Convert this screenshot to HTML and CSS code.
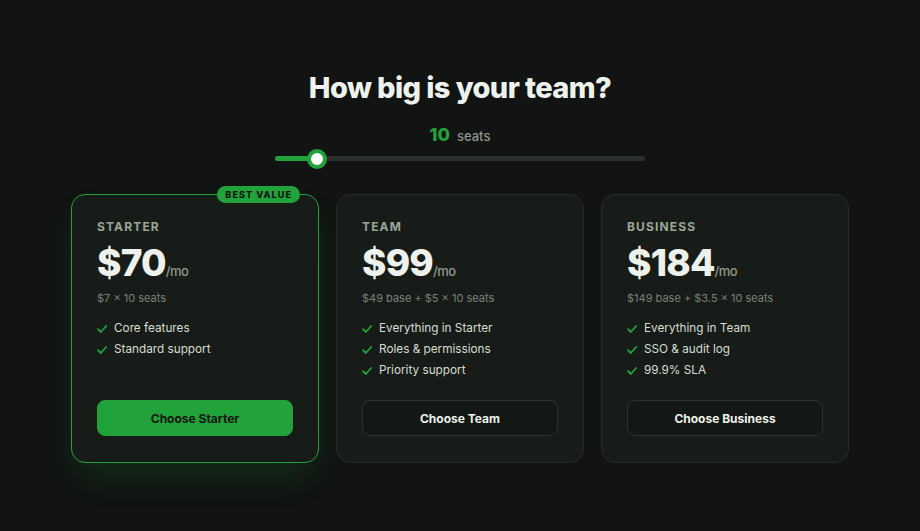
FILE: index.html
```html
<!DOCTYPE html>
<html lang="en">
<head>
<meta charset="utf-8">
<title>Pricing</title>
<link rel="stylesheet" href="styles.css">
</head>
<body>
<main class="page">
  <h1 class="title">How big is your team?</h1>
  <div class="seats"><span class="seats-num">10</span><span class="seats-label">seats</span></div>
  <div class="slider">
    <div class="slider-fill" style="width: 42px"></div>
    <div class="slider-thumb" style="left: 32px"></div>
  </div>

  <section class="plans">
    <article class="plan plan-featured">
      <span class="badge">BEST VALUE</span>
      <h2 class="plan-name">STARTER</h2>
      <div class="price"><span class="amount">$70</span><span class="per">/mo</span></div>
      <p class="calc">$7 × 10 seats</p>
      <ul class="features">
        <li><svg class="check" viewBox="0 0 10 8"><path d="M1 4.2 L3.8 7 L9.2 1"/></svg>Core features</li>
        <li><svg class="check" viewBox="0 0 10 8"><path d="M1 4.2 L3.8 7 L9.2 1"/></svg>Standard support</li>
      </ul>
      <button class="btn btn-primary">Choose Starter</button>
    </article>

    <article class="plan">
      <h2 class="plan-name">TEAM</h2>
      <div class="price"><span class="amount">$99</span><span class="per">/mo</span></div>
      <p class="calc">$49 base + $5 × 10 seats</p>
      <ul class="features">
        <li><svg class="check" viewBox="0 0 10 8"><path d="M1 4.2 L3.8 7 L9.2 1"/></svg>Everything in Starter</li>
        <li><svg class="check" viewBox="0 0 10 8"><path d="M1 4.2 L3.8 7 L9.2 1"/></svg>Roles &amp; permissions</li>
        <li><svg class="check" viewBox="0 0 10 8"><path d="M1 4.2 L3.8 7 L9.2 1"/></svg>Priority support</li>
      </ul>
      <button class="btn">Choose Team</button>
    </article>

    <article class="plan">
      <h2 class="plan-name">BUSINESS</h2>
      <div class="price"><span class="amount">$184</span><span class="per">/mo</span></div>
      <p class="calc">$149 base + $3.5 × 10 seats</p>
      <ul class="features">
        <li><svg class="check" viewBox="0 0 10 8"><path d="M1 4.2 L3.8 7 L9.2 1"/></svg>Everything in Team</li>
        <li><svg class="check" viewBox="0 0 10 8"><path d="M1 4.2 L3.8 7 L9.2 1"/></svg>SSO &amp; audit log</li>
        <li><svg class="check" viewBox="0 0 10 8"><path d="M1 4.2 L3.8 7 L9.2 1"/></svg>99.9% SLA</li>
      </ul>
      <button class="btn">Choose Business</button>
    </article>
  </section>
</main>
</body>
</html>
```
FILE: styles.css
```css
* { box-sizing: border-box; }

html, body {
  margin: 0;
  height: 100%;
}

body {
  background: #111412;
  color: #eef2ec;
  font-family: Inter, "Noto Sans", "Liberation Sans", sans-serif;
}

.page {
  display: flex;
  flex-direction: column;
  align-items: center;
  padding-top: 70px;
}

.title {
  margin: 0;
  font-size: 29px;
  font-weight: 800;
  letter-spacing: -0.6px;
  line-height: 36px;
  color: #eef2ec;
}

.seats {
  margin-top: 18px;
  display: flex;
  align-items: baseline;
  gap: 7px;
  line-height: 22px;
}

.seats-num {
  font-size: 18px;
  font-weight: 800;
  color: #22a23a;
}

.seats-label {
  font-size: 13px;
  font-weight: 500;
  color: #8e978e;
}

/* seat slider: track, filled part and thumb */
.slider {
  position: relative;
  margin-top: 9px;
  width: 370px;
  height: 5px;
  border-radius: 3px;
  background: #2a2f2b;
}

.slider-fill {
  height: 100%;
  border-radius: 3px;
  background: #22a23a;
}

.slider-thumb {
  position: absolute;
  top: 50%;
  width: 20px;
  height: 20px;
  margin-top: -10px;
  border-radius: 50%;
  background: #ffffff;
  border: 4px solid #22a23a;
}

.plans {
  margin-top: 33px;
  display: grid;
  grid-template-columns: repeat(3, 248px);
  gap: 17px;
}

.plan {
  position: relative;
  display: flex;
  flex-direction: column;
  padding: 24px 25px 26px;
  background: #181c18;
  border: 1px solid #262b26;
  border-radius: 14px;
}

.plan-featured {
  border-color: #22a23a;
  box-shadow: 0 18px 36px -10px rgba(34, 162, 58, 0.22);
}

.badge {
  position: absolute;
  top: -9px;
  right: 18px;
  height: 17px;
  padding: 0 8px;
  border-radius: 9px;
  background: #22a23a;
  color: #0b160d;
  font-size: 9px;
  font-weight: 800;
  letter-spacing: 1.1px;
  line-height: 17px;
}

.plan-name {
  margin: 0;
  font-size: 12px;
  font-weight: 700;
  letter-spacing: 1.15px;
  line-height: 16px;
  color: #9aa596;
}

.price {
  margin-top: 11px;
  display: flex;
  align-items: baseline;
  line-height: 34px;
}

.amount {
  font-size: 37px;
  font-weight: 800;
  letter-spacing: -0.8px;
  color: #eef2ec;
}

.per {
  font-size: 13px;
  font-weight: 500;
  letter-spacing: -0.6px;
  color: #8e978e;
}

.calc {
  margin: 2px 0 0;
  font-size: 11px;
  line-height: 16px;
  color: #788277;
}

.features {
  list-style: none;
  margin: 12px 0 19px;
  padding: 0;
}

.features li {
  display: flex;
  align-items: center;
  gap: 7px;
  font-size: 11.75px;
  line-height: 21px;
  color: #d6dcd4;
}

.check {
  flex: none;
  width: 10px;
  height: 8px;
  fill: none;
  stroke: #22a23a;
  stroke-width: 1.8;
  stroke-linecap: round;
  stroke-linejoin: round;
}

.btn {
  margin-top: auto;
  height: 36px;
  border-radius: 8px;
  border: 1px solid #2c322d;
  background: #141814;
  color: #eef2ec;
  font-family: inherit;
  font-size: 12px;
  font-weight: 700;
  cursor: pointer;
}

.btn-primary {
  border-color: #22a23a;
  background: #22a23a;
  color: #0b160d;
}
```
